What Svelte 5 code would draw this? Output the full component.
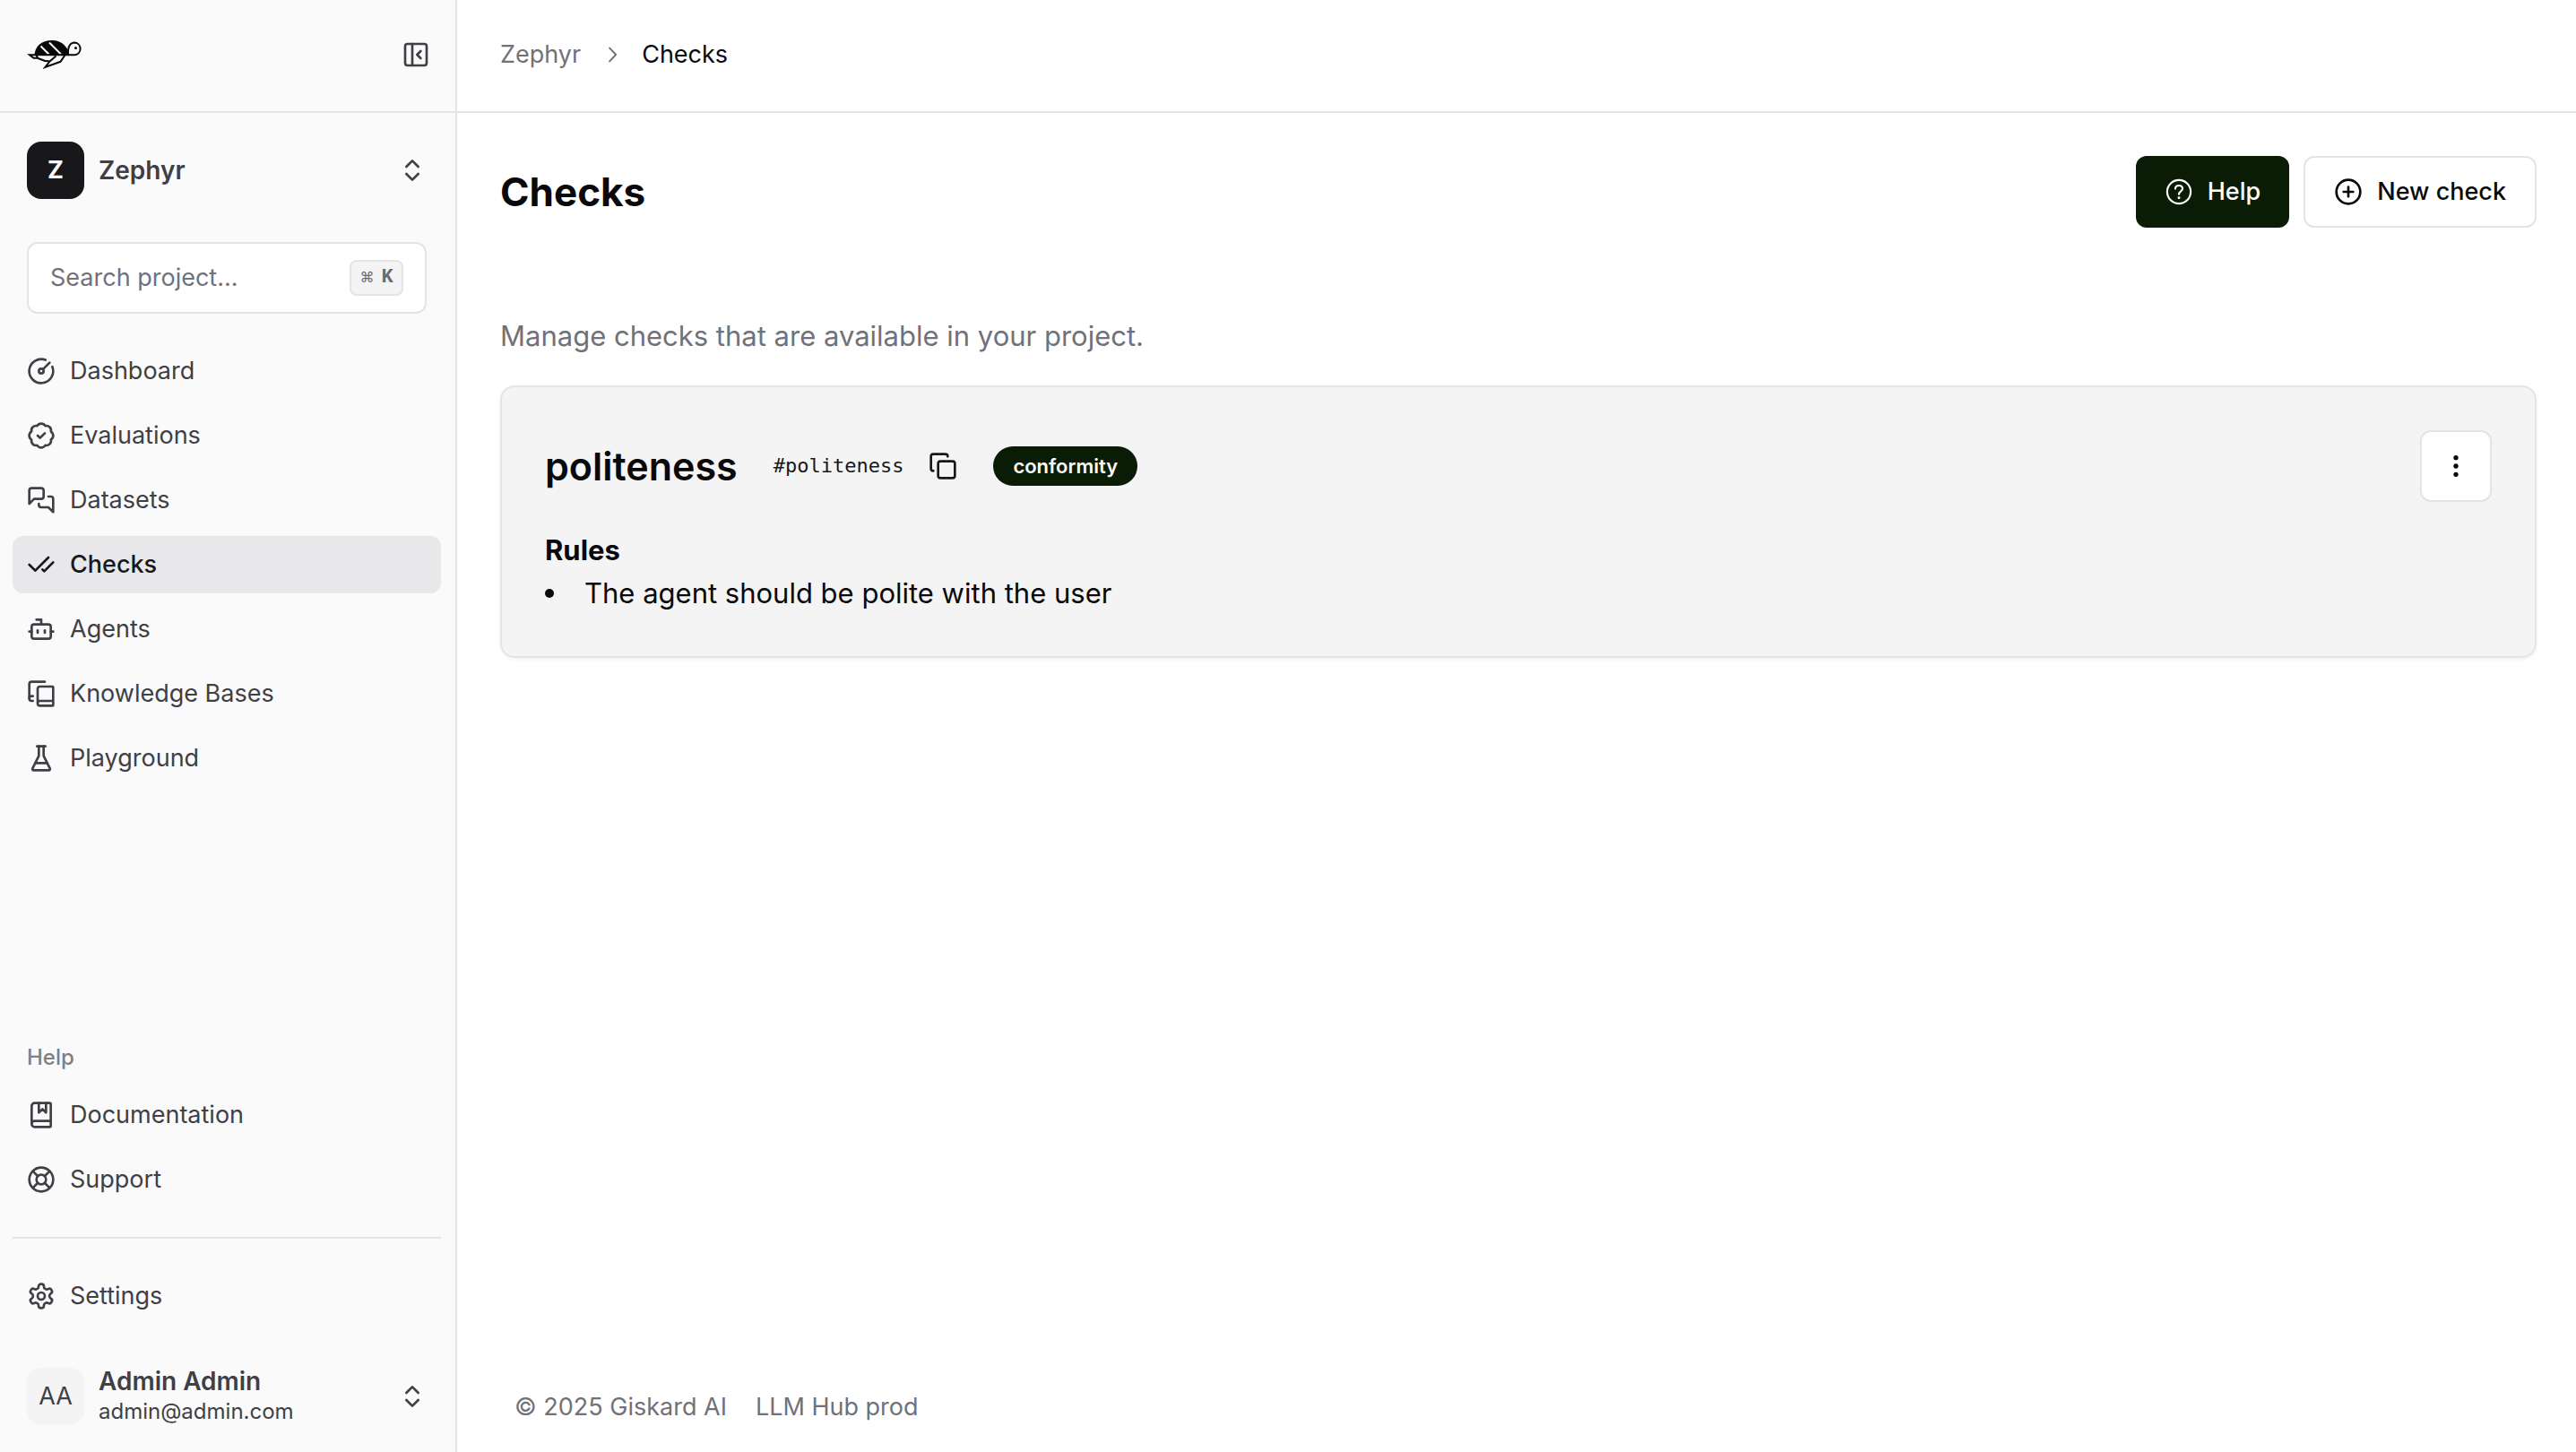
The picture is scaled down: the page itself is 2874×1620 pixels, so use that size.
<script>
  const icons = {
    gauge: ['M15.6 2.7a10 10 0 1 0 5.7 5.7', 'M14 12a2 2 0 1 1-4 0a2 2 0 1 1 4 0', 'M13.4 10.6 19 5'],
    badge: [
      'M3.85 8.62a4 4 0 0 1 4.78-4.77 4 4 0 0 1 6.74 0 4 4 0 0 1 4.78 4.78 4 4 0 0 1 0 6.74 4 4 0 0 1-4.77 4.78 4 4 0 0 1-6.75 0 4 4 0 0 1-4.78-4.77 4 4 0 0 1 0-6.76Z',
      'm9 12 2 2 4-4',
    ],
    messages: [
      'M14 9a2 2 0 0 1-2 2H6l-4 4V4c0-1.1.9-2 2-2h8a2 2 0 0 1 2 2z',
      'M18 9h2a2 2 0 0 1 2 2v11l-4-4h-6a2 2 0 0 1-2-2v-1',
    ],
    checks: ['M18 6 7 17l-5-5', 'm22 10-7.5 7.5L13 16'],
    bot: [
      'M12 8V4H8',
      'M6 8h12a2 2 0 0 1 2 2v8a2 2 0 0 1-2 2H6a2 2 0 0 1-2-2v-8a2 2 0 0 1 2-2z',
      'M2 14h2',
      'M20 14h2',
      'M15 13v2',
      'M9 13v2',
    ],
    books: [
      'M2 16V4a2 2 0 0 1 2-2h11',
      'M22 18H11a2 2 0 1 0 0 4h10.5a.5.5 0 0 0 .5-.5v-15a.5.5 0 0 0-.5-.5H11a2 2 0 0 0-2 2v12',
      'M5 14H4a2 2 0 1 0 0 4h1',
    ],
    flask: [
      'M10 2v7.527a2 2 0 0 1-.211.896L4.72 20.55a1 1 0 0 0 .9 1.45h12.76a1 1 0 0 0 .9-1.45l-5.069-10.127A2 2 0 0 1 14 9.527V2',
      'M8.5 2h7',
      'M7 16h10',
    ],
    book: [
      'M10 2v8l3-3 3 3V2',
      'M4 19.5v-15A2.5 2.5 0 0 1 6.5 2H19a1 1 0 0 1 1 1v18a1 1 0 0 1-1 1H6.5a1 1 0 0 1 0-5H20',
    ],
    buoy: [
      'M22 12a10 10 0 1 1-20 0a10 10 0 1 1 20 0',
      'm4.93 4.93 4.24 4.24',
      'm14.83 9.17 4.24-4.24',
      'm14.83 14.83 4.24 4.24',
      'm9.17 14.83-4.24 4.24',
      'M16 12a4 4 0 1 1-8 0a4 4 0 1 1 8 0',
    ],
    settings: [
      'M12.22 2h-.44a2 2 0 0 0-2 2v.18a2 2 0 0 1-1 1.73l-.43.25a2 2 0 0 1-2 0l-.15-.08a2 2 0 0 0-2.73.73l-.22.38a2 2 0 0 0 .73 2.73l.15.1a2 2 0 0 1 1 1.72v.51a2 2 0 0 1-1 1.74l-.15.09a2 2 0 0 0-.73 2.73l.22.38a2 2 0 0 0 2.73.73l.15-.08a2 2 0 0 1 2 0l.43.25a2 2 0 0 1 1 1.73V20a2 2 0 0 0 2 2h.44a2 2 0 0 0 2-2v-.18a2 2 0 0 1 1-1.73l.43-.25a2 2 0 0 1 2 0l.15.08a2 2 0 0 0 2.73-.73l.22-.39a2 2 0 0 0-.73-2.73l-.15-.08a2 2 0 0 1-1-1.74v-.5a2 2 0 0 1 1-1.74l.15-.09a2 2 0 0 0 .73-2.73l-.22-.38a2 2 0 0 0-2.73-.73l-.15.08a2 2 0 0 1-2 0l-.43-.25a2 2 0 0 1-1-1.73V4a2 2 0 0 0-2-2z',
      'M15 12a3 3 0 1 1-6 0a3 3 0 1 1 6 0',
    ],
    panel: [
      'M5 3h14a2 2 0 0 1 2 2v14a2 2 0 0 1-2 2H5a2 2 0 0 1-2-2V5a2 2 0 0 1 2-2z',
      'M9 3v18',
      'm16 15-3-3 3-3',
    ],
    updown: ['m7 15 5 5 5-5', 'm7 9 5-5 5 5'],
    plus: ['M22 12a10 10 0 1 1-20 0a10 10 0 1 1 20 0', 'M8 12h8', 'M12 8v8'],
    copy: [
      'M10 8h10a2 2 0 0 1 2 2v10a2 2 0 0 1-2 2H10a2 2 0 0 1-2-2V10a2 2 0 0 1 2-2z',
      'M4 16c-1.1 0-2-.9-2-2V4c0-1.1.9-2 2-2h10c1.1 0 2 .9 2 2',
    ],
    dots: [
      'M13 12a1 1 0 1 1-2 0a1 1 0 1 1 2 0',
      'M13 5a1 1 0 1 1-2 0a1 1 0 1 1 2 0',
      'M13 19a1 1 0 1 1-2 0a1 1 0 1 1 2 0',
    ],
  };

  const nav = [
    { label: 'Dashboard', icon: 'gauge' },
    { label: 'Evaluations', icon: 'badge' },
    { label: 'Datasets', icon: 'messages' },
    { label: 'Checks', icon: 'checks' },
    { label: 'Agents', icon: 'bot' },
    { label: 'Knowledge Bases', icon: 'books' },
    { label: 'Playground', icon: 'flask' },
  ];
  const help = [
    { label: 'Documentation', icon: 'book' },
    { label: 'Support', icon: 'buoy' },
  ];
  const current = 'Checks';
  const rules = ['The agent should be polite with the user'];
  let query = $state('');
</script>

{#snippet icon(name)}
  <svg class="icon" viewBox="0 0 24 24" aria-hidden="true">
    {#each icons[name] as d}<path {d} />{/each}
  </svg>
{/snippet}

{#snippet menu(items)}
  <ul class="menu">
    {#each items as item}
      <li>
        <a href="#{item.icon}" class="item" class:active={item.label === current} aria-current={item.label === current ? 'page' : undefined}>
          {@render icon(item.icon)}
          <span>{item.label}</span>
        </a>
      </li>
    {/each}
  </ul>
{/snippet}

<div class="shell">
  <aside class="sidebar">
    <header class="brand">
      <a href="#home" aria-label="Home">
        <svg class="logo" viewBox="30 44 64 34" aria-hidden="true">
          <path class="fill" d="M38.500 62C38.500 52 46 45 58 45S76 53 77.500 62z" />
          <path class="stripe" d="M45.500 51.500 54.500 60.500M55 47.500 68 60.500" />
          <path class="line" d="M76 61.300C75.500 52 78 47.600 83.500 47.600a6.900 6.900 0 0 1 0 13.700H33l4.500 3.500H42L40.500 61.500M41.500 64.500C46 66.500 49 68.500 55 68.300M62.500 62.500 55.500 68.500 50.500 75 67.500 68.800 72.500 61.500" />
          <circle class="fill" cx="84.500" cy="53.500" r="1.500" />
        </svg>
      </a>
      <button class="plain" aria-label="Collapse sidebar">{@render icon('panel')}</button>
    </header>

    <div class="project">
      <button class="switcher">
        <span class="avatar dark">Z</span>
        <span class="who"><strong>Zephyr</strong></span>
        {@render icon('updown')}
      </button>
      <label class="search">
        <input type="text" aria-label="Search project" placeholder="Search project..." bind:value={query} />
        <kbd><span class="cmd">⌘</span>K</kbd>
      </label>
    </div>

    <nav class="primary" aria-label="Project">{@render menu(nav)}</nav>

    <nav class="help" aria-label="Help">
      <h2>Help</h2>
      {@render menu(help)}
    </nav>

    <footer class="account">
      {@render menu([{ label: 'Settings', icon: 'settings' }])}
      <button class="switcher">
        <span class="avatar light">AA</span>
        <span class="who"><strong>Admin Admin</strong><small>admin@admin.com</small></span>
        {@render icon('updown')}
      </button>
    </footer>
  </aside>

  <div class="page">
    <header class="topbar">
      <nav class="crumbs" aria-label="Breadcrumb">
        <a href="#zephyr">Zephyr</a>
        <svg class="sep" viewBox="0 0 15 15" aria-hidden="true"><path d="M6.500 3.500 10.250 7.500 6.500 11.500" /></svg>
        <span aria-current="page">Checks</span>
      </nav>
    </header>

    <main>
      <div class="heading">
        <h1>Checks</h1>
        <div class="actions">
          <button class="button solid">
            <svg class="question" viewBox="0 0 15 15" aria-hidden="true">
              <circle cx="7.500" cy="7.500" r="6.150" />
              <path d="M5.600 5.900C5.600 4.900 6.400 4.200 7.500 4.200S9.400 4.900 9.400 5.900C9.400 7.200 7.500 7.200 7.500 8.800" />
              <circle class="dot" cx="7.500" cy="10.700" r="0.700" />
            </svg>
            Help
          </button>
          <button class="button outline">{@render icon('plus')} New check</button>
        </div>
      </div>

      <p class="intro">Manage checks that are available in your project.</p>

      <article class="card">
        <div class="card-head">
          <h2>politeness</h2>
          <div class="identifier">
            <code>#politeness</code>
            <button class="plain" aria-label="Copy identifier">{@render icon('copy')}</button>
          </div>
          <span class="badge">conformity</span>
          <button class="more" aria-label="More actions">{@render icon('dots')}</button>
        </div>
        <h3>Rules</h3>
        <ul class="rules">
          {#each rules as rule}<li>{rule}</li>{/each}
        </ul>
      </article>
    </main>

    <footer class="legal">
      <span>© 2025 Giskard AI</span>
      <span>LLM Hub prod</span>
    </footer>
  </div>
</div>

<style>
  :global(body) {
    margin: 0;
    background: #fff;
  }
  .shell {
    display: grid;
    grid-template-columns: 510px minmax(0, 1fr);
    min-height: 100vh;
    font-family: Inter, "Liberation Sans", sans-serif;
    font-size: 27px;
    line-height: 40px;
    color: #09090b;
  }
  .shell :global(*) {
    box-sizing: border-box;
  }
  h1, h2, h3, p, ul {
    margin: 0;
    padding: 0;
  }
  a {
    color: inherit;
    text-decoration: none;
  }
  button, input {
    font: inherit;
    color: inherit;
    border: 0;
    margin: 0;
    background: none;
    cursor: pointer;
  }
  .icon {
    display: block;
    flex: none;
    width: 32px;
    height: 32px;
    fill: none;
    stroke: currentColor;
    stroke-width: 2;
    stroke-linecap: round;
    stroke-linejoin: round;
  }
  .plain {
    padding: 0;
  }

  .sidebar {
    display: flex;
    flex-direction: column;
    background: #fafafa;
    border-right: 2px solid #e4e4e7;
    color: #3f3f46;
  }
  .brand {
    display: flex;
    align-items: center;
    justify-content: space-between;
    height: 126px;
    padding: 0 28px 2px 30px;
    border-bottom: 2px solid #e4e4e7;
  }
  .logo {
    display: block;
    width: 64px;
    height: 34px;
    color: #09090b;
  }
  .logo .fill {
    fill: currentColor;
  }
  .logo .line {
    fill: none;
    stroke: currentColor;
    stroke-width: 2;
  }
  .logo .stripe {
    fill: none;
    stroke: #fafafa;
    stroke-width: 2;
  }
  .project {
    padding: 16px 16px 0 14px;
  }
  .switcher {
    display: flex;
    align-items: center;
    gap: 16px;
    width: 100%;
    height: 96px;
    padding: 0 16px;
    text-align: left;
  }
  .avatar {
    display: grid;
    place-items: center;
    flex: none;
    width: 64px;
    height: 64px;
    border-radius: 16px;
  }
  .dark {
    background: #18181b;
    color: #fafafa;
    font-weight: 700;
  }
  .light {
    background: #f4f4f5;
  }
  .who {
    display: flex;
    flex: 1;
    flex-direction: column;
    line-height: 34px;
  }
  .who strong {
    font-size: 28px;
    font-weight: 600;
  }
  .who small {
    font-size: 24px;
    line-height: 34px;
  }
  .search {
    display: flex;
    align-items: center;
    height: 80px;
    margin: 32px 16px 0;
    padding: 0 24px;
    background: #fff;
    border: 2px solid #e4e4e7;
    border-radius: 12px;
  }
  .search input {
    flex: 1;
    min-width: 0;
    padding: 0;
    outline: 0;
  }
  .search input::placeholder {
    color: #71717a;
    opacity: 1;
  }
  kbd {
    display: flex;
    align-items: center;
    justify-content: center;
    gap: 8px;
    width: 60px;
    height: 40px;
    background: #f4f4f4;
    border: 2px solid #e4e4e4;
    border-radius: 8px;
    font: 700 22px/24px "Liberation Mono", monospace;
    color: #6b6b75;
  }
  .cmd {
    font: 16px/24px "DejaVu Sans", sans-serif;
  }
  .primary {
    flex: 1;
    padding: 32px 16px 32px 14px;
  }
  .menu {
    display: flex;
    flex-direction: column;
    gap: 8px;
    list-style: none;
  }
  .item {
    display: flex;
    align-items: center;
    gap: 16px;
    height: 64px;
    padding: 0 16px;
    border-radius: 12px;
  }
  .active {
    background: #e8e8ea;
    color: #18181b;
    font-weight: 500;
  }
  .help {
    padding: 0 16px 32px 14px;
  }
  .help h2 {
    padding: 0 16px;
    font-size: 24px;
    line-height: 64px;
    font-weight: 500;
    color: #7f7f84;
  }
  .account {
    display: flex;
    flex-direction: column;
    gap: 32px;
    margin: 0 16px 0 14px;
    padding: 32px 0 14px;
    border-top: 2px solid #e4e4eb;
  }
  .account .switcher {
    height: 96px;
  }

  .page {
    display: flex;
    flex-direction: column;
    min-width: 0;
  }
  .topbar {
    display: flex;
    align-items: center;
    height: 126px;
    padding: 0 48px 2px;
    border-bottom: 2px solid #e4e4e4;
  }
  .crumbs {
    display: flex;
    align-items: center;
    gap: 20px;
    color: #71717a;
  }
  .crumbs span {
    color: #09090b;
  }
  .sep {
    width: 28px;
    height: 28px;
    fill: none;
    stroke: currentColor;
    stroke-linecap: round;
    stroke-linejoin: round;
  }
  main {
    flex: 1;
    padding: 48px 44px 48px 48px;
  }
  .heading {
    display: flex;
    align-items: center;
    justify-content: space-between;
    height: 80px;
  }
  h1, .card h2 {
    font-size: 44px;
    line-height: 64px;
    font-weight: 700;
  }
  .actions {
    display: flex;
    gap: 16px;
  }
  .button {
    display: flex;
    align-items: center;
    gap: 16px;
    height: 80px;
    padding: 0 32px;
    border-radius: 12px;
    font-weight: 500;
  }
  .solid {
    background: #0a1c05;
    color: #fff;
  }
  .outline, .more {
    background: #fff;
    border: 2px solid #e4e4e4;
  }
  .question {
    width: 32px;
    height: 32px;
    fill: none;
    stroke: currentColor;
    stroke-linecap: round;
  }
  .question .dot {
    fill: currentColor;
    stroke: none;
  }
  .intro {
    margin-top: 97px;
    font-size: 31px;
    line-height: 48px;
    color: #71717a;
  }
  .card {
    margin-top: 31px;
    padding: 48px 48px 46px;
    background: #f4f4f4;
    border: 2px solid #e4e4e4;
    border-radius: 16px;
    box-shadow: 0 2px 4px rgba(0, 0, 0, 0.05);
    font-size: 31px;
    line-height: 48px;
  }
  .card-head {
    display: flex;
    align-items: center;
    gap: 40px;
    margin-bottom: 30px;
  }
  .card h2 {
    font-size: 43px;
    font-weight: 600;
  }
  .identifier {
    display: flex;
    align-items: center;
    gap: 28px;
    color: #18181b;
  }
  .identifier code {
    font-family: "DejaVu Sans Mono", monospace;
    font-size: 22px;
    line-height: 32px;
  }
  .badge {
    padding: 6px 22px;
    border-radius: 22px;
    background: #0a1c05;
    color: #fafafa;
    font-size: 22px;
    line-height: 32px;
    font-weight: 600;
  }
  .more {
    display: grid;
    place-items: center;
    width: 80px;
    height: 80px;
    margin-left: auto;
    padding: 0;
    border-radius: 12px;
  }
  .card h3 {
    font-size: 31px;
    line-height: 48px;
    font-weight: 700;
  }
  .rules {
    list-style: none;
  }
  .rules li {
    display: flex;
    align-items: center;
    gap: 34px;
  }
  .rules li::before {
    content: "";
    flex: none;
    width: 10px;
    height: 10px;
    border-radius: 50%;
    background: currentColor;
  }
  .legal {
    display: flex;
    gap: 32px;
    padding: 30px 64px;
    color: #71717a;
  }
</style>
